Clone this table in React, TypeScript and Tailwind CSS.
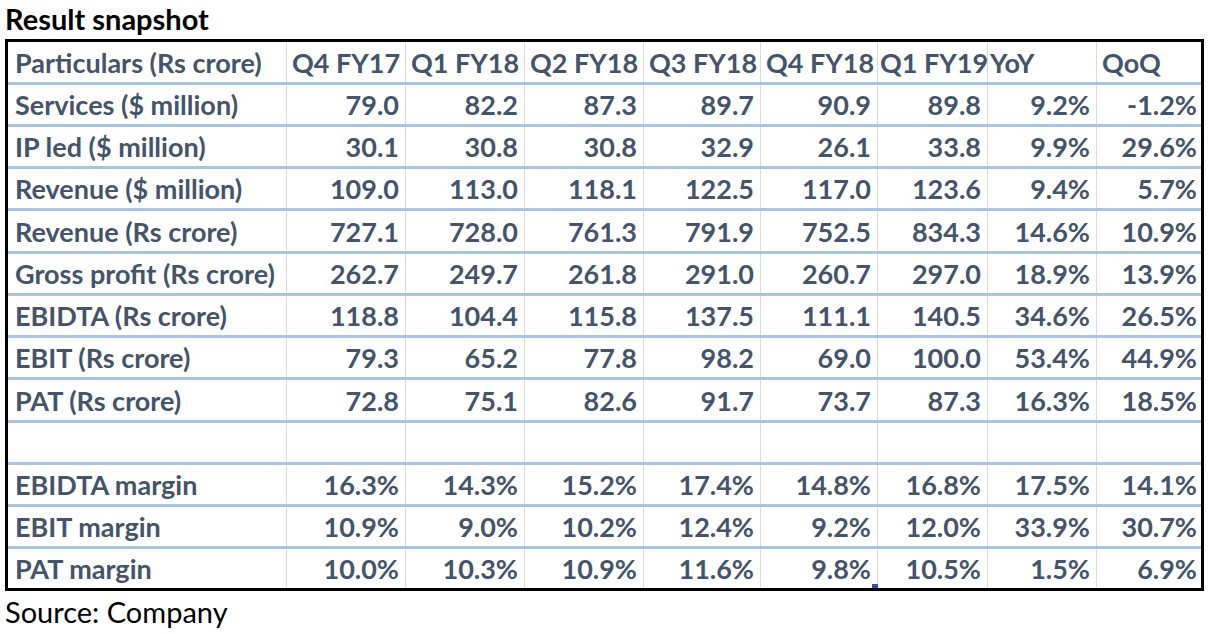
const font = { fontFamily: "Lato, 'Open Sans', sans-serif" }

const cols = ["w-[279px]", "w-[119px]", "w-[119px]", "w-[119px]", "w-[117px]", "w-[117px]", "w-[110px]", "w-[109px]", "w-[104px]"]

const header = ["Particulars (Rs crore)", "Q4 FY17", "Q1 FY18", "Q2 FY18", "Q3 FY18", "Q4 FY18", "Q1 FY19", "YoY", "QoQ"]

const rows: string[][] = [
  ["Services ($ million)", "79.0", "82.2", "87.3", "89.7", "90.9", "89.8", "9.2%", "-1.2%"],
  ["IP led ($ million)", "30.1", "30.8", "30.8", "32.9", "26.1", "33.8", "9.9%", "29.6%"],
  ["Revenue ($ million)", "109.0", "113.0", "118.1", "122.5", "117.0", "123.6", "9.4%", "5.7%"],
  ["Revenue (Rs crore)", "727.1", "728.0", "761.3", "791.9", "752.5", "834.3", "14.6%", "10.9%"],
  ["Gross profit (Rs crore)", "262.7", "249.7", "261.8", "291.0", "260.7", "297.0", "18.9%", "13.9%"],
  ["EBIDTA (Rs crore)", "118.8", "104.4", "115.8", "137.5", "111.1", "140.5", "34.6%", "26.5%"],
  ["EBIT (Rs crore)", "79.3", "65.2", "77.8", "98.2", "69.0", "100.0", "53.4%", "44.9%"],
  ["PAT (Rs crore)", "72.8", "75.1", "82.6", "91.7", "73.7", "87.3", "16.3%", "18.5%"],
  ["", "", "", "", "", "", "", "", ""],
  ["EBIDTA margin", "16.3%", "14.3%", "15.2%", "17.4%", "14.8%", "16.8%", "17.5%", "14.1%"],
  ["EBIT margin", "10.9%", "9.0%", "10.2%", "12.4%", "9.2%", "12.0%", "33.9%", "30.7%"],
  ["PAT margin", "10.0%", "10.3%", "10.9%", "11.6%", "9.8%", "10.5%", "1.5%", "6.9%"],
]

// a few rows are one pixel taller so the blue rules land where they do in the sheet
const rowHeight = (i: number) => {
  if (i === rows.length - 1) return "h-[39px]"
  if (i === 3 || i === 7) return "h-[43px] border-b-[3px] border-[#a9c5e5]"
  return "h-[42px] border-b-[3px] border-[#a9c5e5]"
}

export default function App() {
  return (
    <div className="w-[1213px] h-[634px] bg-white overflow-hidden" style={font}>
      <div className="h-[39px] pl-[5px] pb-[3px] flex items-center text-[29px] font-bold text-black leading-none">
        Result snapshot
      </div>

      <div className="relative ml-[5px] w-[1199px] border-[3px] border-black text-[#44546a] font-bold text-[27px] leading-none">
        {/* Header */}
        <div className="flex h-[43px] border-b-[3px] border-[#a9c5e5]">
          {header.map((h, i) => (
            <div
              key={i}
              className={`${cols[i]} shrink-0 flex items-center whitespace-nowrap overflow-visible ${i === 0 ? "pl-[7px]" : i === 6 || i === 7 ? "pl-[2px]" : "pl-[5px]"} ${i < 8 ? "border-r border-[#dadada]" : ""}`}
            >
              {h}
            </div>
          ))}
        </div>

        {rows.map((r, ri) => (
          <div key={ri} className={`flex ${rowHeight(ri)}`}>
            {r.map((c, ci) => (
              <div
                key={ci}
                className={`${cols[ci]} shrink-0 flex items-center whitespace-nowrap ${ci === 0 ? "pl-[7px] justify-start" : ci === 8 ? "pr-[4px] justify-end" : "pr-[6px] justify-end"} ${ci < 8 ? "border-r border-[#dadada]" : ""}`}
              >
                {c}
              </div>
            ))}
          </div>
        ))}

        {/* fill handle left over from the spreadsheet selection */}
        <span className="absolute left-[864px] bottom-0 w-[6px] h-[4px] bg-[#3a4fa0]" />
      </div>

      <div className="pl-[5px] pt-[6px] text-[29px] text-black leading-none">Source: Company</div>
    </div>
  )
}
